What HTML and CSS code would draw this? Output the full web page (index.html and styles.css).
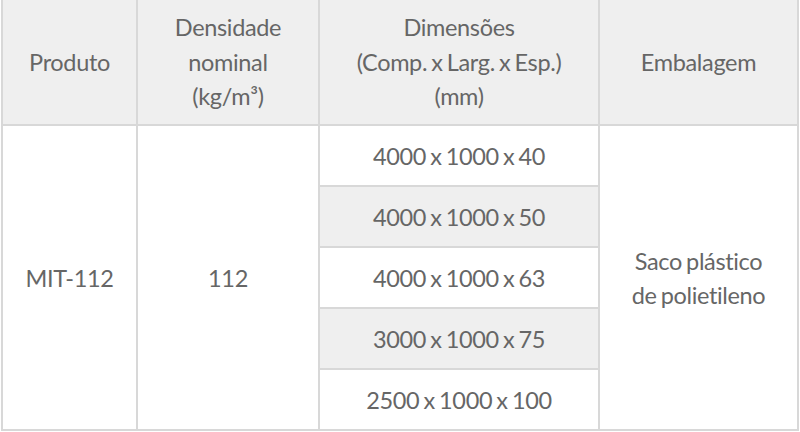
FILE: index.html
```html
<!DOCTYPE html>
<html lang="pt">
<head>
<meta charset="utf-8">
<link rel="stylesheet" href="styles.css">
</head>
<body>
<table class="spec">
  <colgroup>
    <col class="c1"><col class="c2"><col class="c3"><col class="c4">
  </colgroup>
  <thead>
    <tr>
      <th>Produto</th>
      <th>Densidade<br>nominal<br>(kg/m³)</th>
      <th>Dimensões<br>(Comp. x Larg. x Esp.)<br>(mm)</th>
      <th>Embalagem</th>
    </tr>
  </thead>
  <tbody>
    <tr>
      <td rowspan="5">MIT-112</td>
      <td rowspan="5">112</td>
      <td>4000 x 1000 x 40</td>
      <td rowspan="5">Saco plástico<br>de polietileno</td>
    </tr>
    <tr><td class="alt">4000 x 1000 x 50</td></tr>
    <tr><td>4000 x 1000 x 63</td></tr>
    <tr><td class="alt">3000 x 1000 x 75</td></tr>
    <tr><td>2500 x 1000 x 100</td></tr>
  </tbody>
</table>
</body>
</html>
```
FILE: styles.css
```css
html, body {
  margin: 0;
  padding: 0;
  background: #ffffff;
}
body {
  padding-left: 1px;
  font-family: Lato, "Open Sans", sans-serif;
  color: #666666;
}
.spec {
  border-collapse: collapse;
  width: 796px;
  margin-top: -2px;
  table-layout: fixed;
  font-size: 23.5px;
  letter-spacing: -0.35px;
  word-spacing: -1.5px;
}
.c1 { width: 135px; }
.c2 { width: 182px; }
.c3 { width: 280px; }
.c4 { width: 199px; }
.spec th, .spec td {
  border: 2px solid #d8d8d8;
  text-align: center;
  vertical-align: middle;
  padding: 0;
  font-weight: 400;
}
.spec th {
  background: #efefef;
  height: 124px;
  line-height: 34.5px;
}
.spec td {
  height: 59px;
  line-height: 34px;
}
.spec td.alt {
  background: #efefef;
}
```
